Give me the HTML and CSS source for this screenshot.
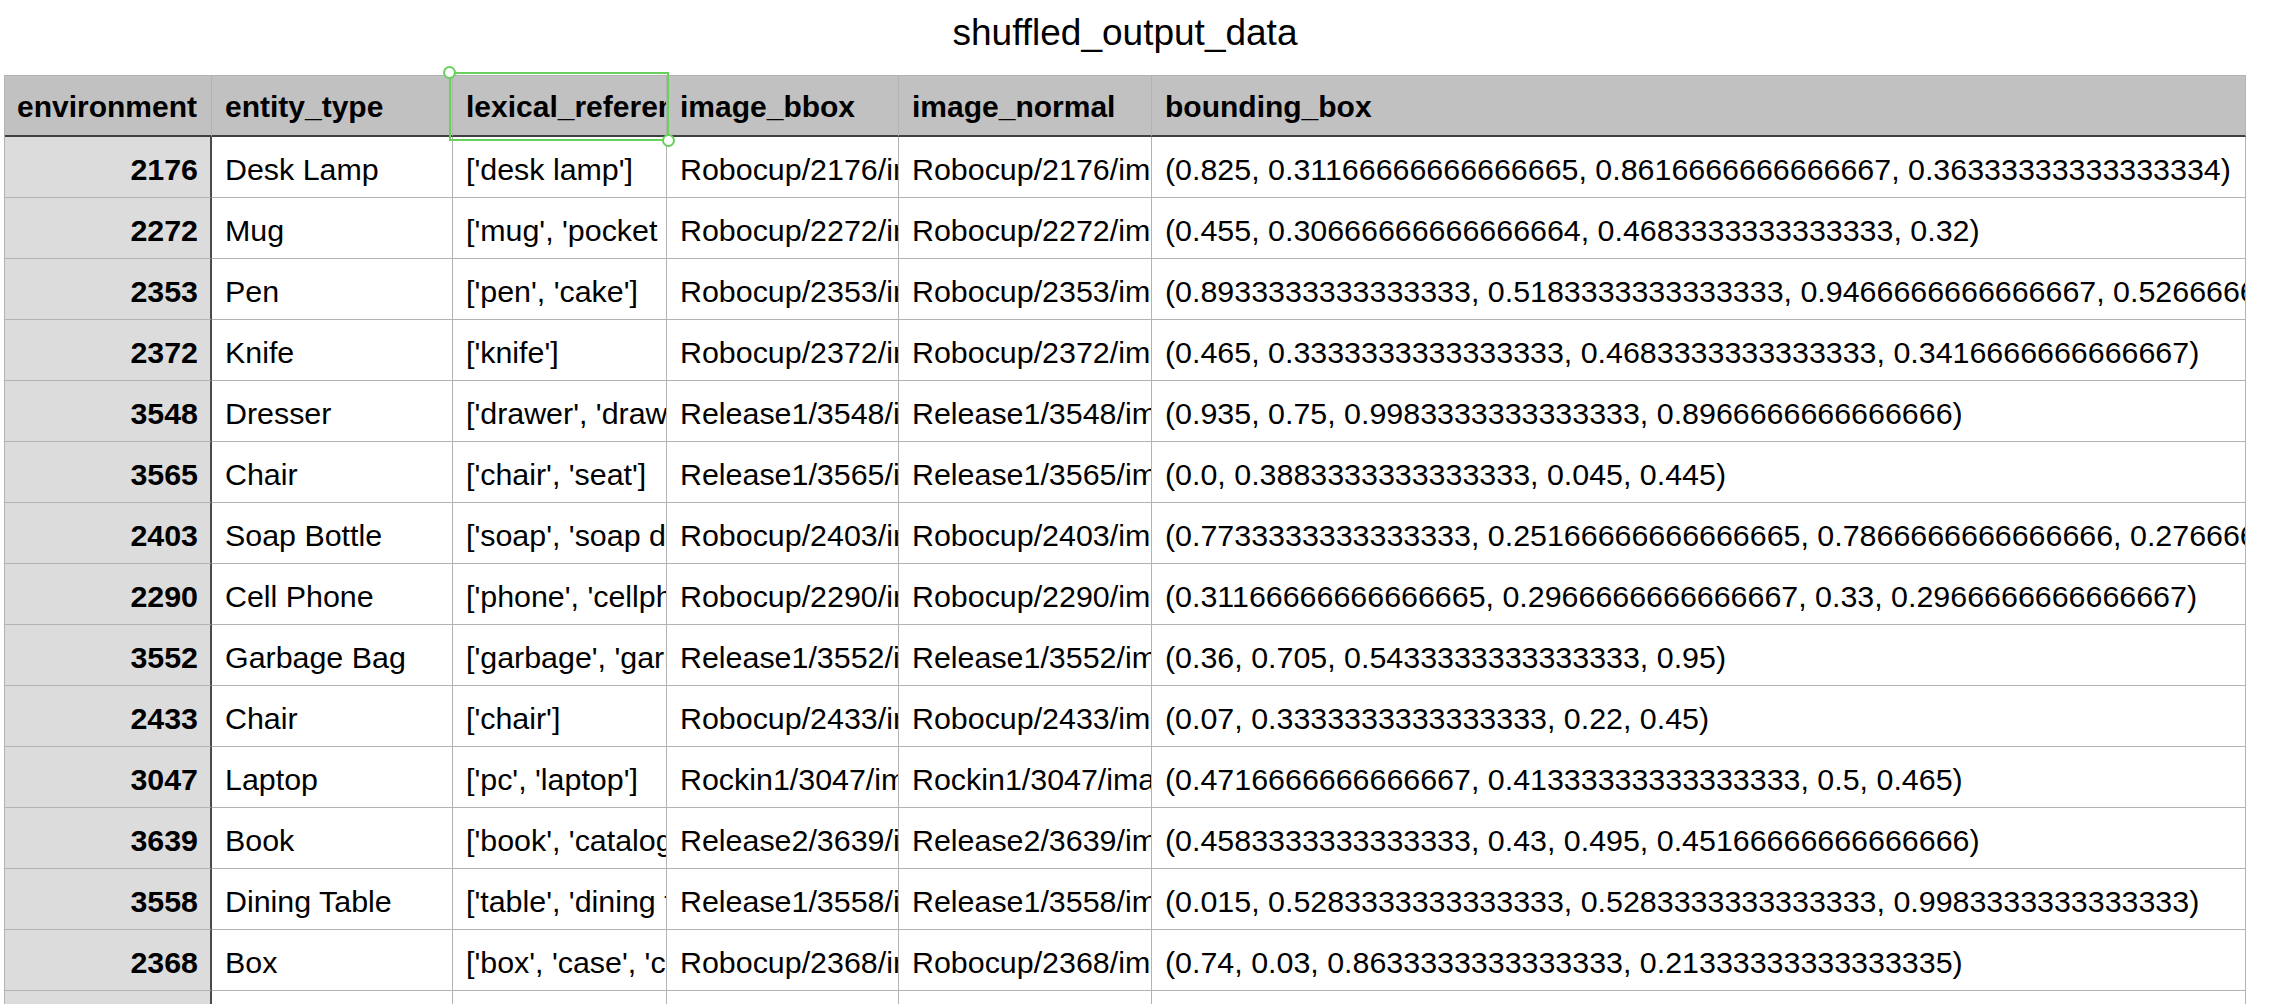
FILE: index.html
```html
<!DOCTYPE html>
<html lang="en">
<head>
<meta charset="utf-8">
<title>shuffled_output_data</title>
<link rel="stylesheet" href="styles.css">
</head>
<body>
<div class="sheet">
  <h1 class="title">shuffled_output_data</h1>
  <div class="table">
    <div class="row head">
      <div class="cell rh">environment</div>
      <div class="cell">entity_type</div>
      <div class="cell">lexical_reference</div>
      <div class="cell">image_bbox</div>
      <div class="cell">image_normal</div>
      <div class="cell">bounding_box</div>
    </div>
    <div class="row"><div class="cell rh num">2176</div><div class="cell">Desk Lamp</div><div class="cell">['desk lamp']</div><div class="cell">Robocup/2176/image_bbox.png</div><div class="cell">Robocup/2176/image_normal.png</div><div class="cell">(0.825, 0.31166666666666665, 0.8616666666666667, 0.36333333333333334)</div></div>
    <div class="row"><div class="cell rh num">2272</div><div class="cell">Mug</div><div class="cell">['mug', 'pocket mug']</div><div class="cell">Robocup/2272/image_bbox.png</div><div class="cell">Robocup/2272/image_normal.png</div><div class="cell">(0.455, 0.30666666666666664, 0.4683333333333333, 0.32)</div></div>
    <div class="row"><div class="cell rh num">2353</div><div class="cell">Pen</div><div class="cell">['pen', 'cake']</div><div class="cell">Robocup/2353/image_bbox.png</div><div class="cell">Robocup/2353/image_normal.png</div><div class="cell">(0.8933333333333333, 0.5183333333333333, 0.9466666666666667, 0.5266666666666666)</div></div>
    <div class="row"><div class="cell rh num">2372</div><div class="cell">Knife</div><div class="cell">['knife']</div><div class="cell">Robocup/2372/image_bbox.png</div><div class="cell">Robocup/2372/image_normal.png</div><div class="cell">(0.465, 0.3333333333333333, 0.4683333333333333, 0.3416666666666667)</div></div>
    <div class="row"><div class="cell rh num">3548</div><div class="cell">Dresser</div><div class="cell">['drawer', 'drawers']</div><div class="cell">Release1/3548/image_bbox.png</div><div class="cell">Release1/3548/image_normal.png</div><div class="cell">(0.935, 0.75, 0.9983333333333333, 0.8966666666666666)</div></div>
    <div class="row"><div class="cell rh num">3565</div><div class="cell">Chair</div><div class="cell">['chair', 'seat']</div><div class="cell">Release1/3565/image_bbox.png</div><div class="cell">Release1/3565/image_normal.png</div><div class="cell">(0.0, 0.3883333333333333, 0.045, 0.445)</div></div>
    <div class="row"><div class="cell rh num">2403</div><div class="cell">Soap Bottle</div><div class="cell">['soap', 'soap dispenser']</div><div class="cell">Robocup/2403/image_bbox.png</div><div class="cell">Robocup/2403/image_normal.png</div><div class="cell">(0.7733333333333333, 0.25166666666666665, 0.7866666666666666, 0.2766666666666667)</div></div>
    <div class="row"><div class="cell rh num">2290</div><div class="cell">Cell Phone</div><div class="cell">['phone', 'cellphone']</div><div class="cell">Robocup/2290/image_bbox.png</div><div class="cell">Robocup/2290/image_normal.png</div><div class="cell">(0.31166666666666665, 0.2966666666666667, 0.33, 0.2966666666666667)</div></div>
    <div class="row"><div class="cell rh num">3552</div><div class="cell">Garbage Bag</div><div class="cell">['garbage', 'garbage bag']</div><div class="cell">Release1/3552/image_bbox.png</div><div class="cell">Release1/3552/image_normal.png</div><div class="cell">(0.36, 0.705, 0.5433333333333333, 0.95)</div></div>
    <div class="row"><div class="cell rh num">2433</div><div class="cell">Chair</div><div class="cell">['chair']</div><div class="cell">Robocup/2433/image_bbox.png</div><div class="cell">Robocup/2433/image_normal.png</div><div class="cell">(0.07, 0.3333333333333333, 0.22, 0.45)</div></div>
    <div class="row"><div class="cell rh num">3047</div><div class="cell">Laptop</div><div class="cell">['pc', 'laptop']</div><div class="cell">Rockin1/3047/image_bbox.png</div><div class="cell">Rockin1/3047/image_normal.png</div><div class="cell">(0.4716666666666667, 0.41333333333333333, 0.5, 0.465)</div></div>
    <div class="row"><div class="cell rh num">3639</div><div class="cell">Book</div><div class="cell">['book', 'catalog']</div><div class="cell">Release2/3639/image_bbox.png</div><div class="cell">Release2/3639/image_normal.png</div><div class="cell">(0.4583333333333333, 0.43, 0.495, 0.45166666666666666)</div></div>
    <div class="row"><div class="cell rh num">3558</div><div class="cell">Dining Table</div><div class="cell">['table', 'dining table']</div><div class="cell">Release1/3558/image_bbox.png</div><div class="cell">Release1/3558/image_normal.png</div><div class="cell">(0.015, 0.5283333333333333, 0.5283333333333333, 0.9983333333333333)</div></div>
    <div class="row"><div class="cell rh num">2368</div><div class="cell">Box</div><div class="cell">['box', 'case', 'crate']</div><div class="cell">Robocup/2368/image_bbox.png</div><div class="cell">Robocup/2368/image_normal.png</div><div class="cell">(0.74, 0.03, 0.8633333333333333, 0.21333333333333335)</div></div>
    <div class="row"><div class="cell rh num"></div><div class="cell"></div><div class="cell"></div><div class="cell"></div><div class="cell"></div><div class="cell"></div></div>
    <div class="selection"><span class="handle tl"></span><span class="handle br"></span></div>
  </div>
</div>
</body>
</html>
```

FILE: styles.css
```css
html, body {
  margin: 0;
  padding: 0;
  overflow: hidden;
  background: #ffffff;
}

body {
  font-family: "Liberation Sans", Arial, Helvetica, sans-serif;
  color: #000000;
}

.sheet {
  width: 2242px;
  margin-left: 4px;
  padding-top: 12px;
}

.title {
  margin: 0 0 21px 0;
  font-size: 37px;
  line-height: 42px;
  font-weight: normal;
  text-align: center;
}

.table {
  position: relative;
  border-left: 1px solid #b3b3b3;
  border-top: 1px solid #b3b3b3;
}

.row {
  display: grid;
  grid-template-columns: 207px 241px 214px 232px 253px 1094px;
}

.cell {
  box-sizing: border-box;
  height: 61px;
  padding-left: 13px;
  padding-top: 4px;
  display: flex;
  align-items: center;
  overflow: hidden;
  white-space: nowrap;
  font-size: 30.4px;
  border-right: 1px solid #b3b3b3;
  border-bottom: 1px solid #b3b3b3;
  background: #ffffff;
}

.head .cell {
  height: 61px;
  padding-top: 2px;
  font-size: 30px;
  background: #c0c1c0;
  font-weight: bold;
  border-bottom: 2px solid #404040;
}

.head .cell.rh {
  padding-left: 12px;
}

.cell.rh.num {
  background: #dcdcdc;
  font-weight: bold;
  justify-content: flex-end;
  padding-left: 0;
  padding-right: 12px;
  border-right: 2px solid #4a4a4a;
}

.selection {
  position: absolute;
  left: 444px;
  top: -4px;
  width: 216px;
  height: 65px;
  border: 2px solid #68d15d;
}

.handle {
  position: absolute;
  width: 9px;
  height: 9px;
  border-radius: 50%;
  border: 2px solid #68d15d;
  background: #ffffff;
}

.handle.tl {
  left: -8px;
  top: -8px;
}

.handle.br {
  right: -8px;
  bottom: -8px;
}
```
